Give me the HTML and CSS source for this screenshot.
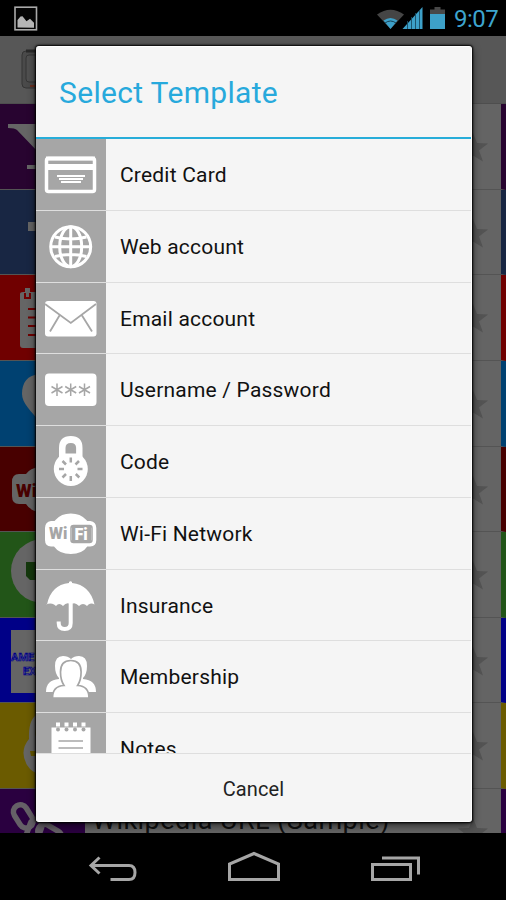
FILE: index.html
```html
<!DOCTYPE html>
<html lang="en">
<head>
<meta charset="utf-8">
<title>Select Template</title>
<link rel="stylesheet" href="styles.css">
</head>
<body>
<div class="screen">
  <header class="status">
    <svg class="status-picture" width="24" height="26" viewBox="0 0 24 26"><rect x="1" y="1.2" width="21.5" height="22.6" fill="#050505" stroke="#aaa" stroke-width="1.6"/><path d="M3.5 21.500V14l3-3.500 2-.3 4 5 3.500-2.500 4 4v5z" fill="#b5b5b5"/></svg>
    <svg class="status-signals" width="72" height="26" viewBox="0 0 72 26"><path d="M1 7.500Q14.500-2 28 7.500L14.500 22z" fill="#454545"/><path d="M7.500 13.500Q14.500 8.500 21.500 13.500L14.500 22z" fill="#3da0c8"/><path d="M9 16q5.500-4 11 0" fill="none" stroke="#174052"/><path d="M26.500 22L46.500 0V22z" fill="#3da0c8"/><path d="M31.500 14v8M35.500 10v12M39.500 6v16M43.500 3v19" stroke="#174c62" stroke-width=".9"/><path d="M54 7V2.500h4.500V0h6v2.500H69V7z" fill="#484848"/><path d="M54 7h15v15H54z" fill="#3da0c8"/></svg>
    <span class="clock">9:07</span>
  </header>
  <main class="app">
    <div class="appbar"><svg width="30" height="44" viewBox="0 0 30 44"><rect x="1" y="2" width="38" height="37" rx="4" fill="#4a4a4a" stroke="#343434"/><path d="M5 2h24" stroke="#292929" stroke-width="3"/><rect x="5" y="6" width="30" height="27" rx="3" fill="#505050" stroke="#353535"/><path d="M9 37h20" stroke="#6b3020" stroke-width="2"/></svg></div>
    <ul class="accounts">
      <li class="account plum"><svg class="logo" viewBox="0 0 85 86"><path d="M8 20h32v30L17 26q-2-2-9-2zM27 61h13v4H27z"/></svg><svg class="star" viewBox="0 0 32 32"><path d="M16 1l4 10 11 .4-9 7 4 11-10-6-10 6 4-11-9-7 11-.4z"/></svg></li>
      <li class="account navy"><svg class="logo" viewBox="0 0 85 86"><path d="M28 32h12v9H28z"/></svg><svg class="star" viewBox="0 0 32 32"><path d="M16 1l4 10 11 .4-9 7 4 11-10-6-10 6 4-11-9-7 11-.4z"/></svg></li>
      <li class="account red"><svg class="logo" viewBox="0 0 85 86"><path d="M20 19q0-2 3-2h2v-4h5v4h10v56H23q-3 0-3-3z"/><path d="M25 18v5h5v-5M28 34h12M28 42.500h12M28 51h12M28 60h12" fill="none" stroke="#700000" stroke-width="2"/></svg><svg class="star" viewBox="0 0 32 32"><path d="M16 1l4 10 11 .4-9 7 4 11-10-6-10 6 4-11-9-7 11-.4z"/></svg></li>
      <li class="account azure"><svg class="logo" viewBox="0 0 85 86"><path d="M40 13C27 14 22 22 22 33c0 9 9 17 18 28z"/></svg><svg class="star" viewBox="0 0 32 32"><path d="M16 1l4 10 11 .4-9 7 4 11-10-6-10 6 4-11-9-7 11-.4z"/></svg></li>
      <li class="account maroon"><svg class="logo" viewBox="0 0 85 86"><path d="M40 20Q30 21 26 27h-7q-7 0-7 8v14q0 8 7 8h7q4 7 14 8z"/><text class="logo-wifi" x="16" y="50">Wi</text></svg><svg class="star" viewBox="0 0 32 32"><path d="M16 1l4 10 11 .4-9 7 4 11-10-6-10 6 4-11-9-7 11-.4z"/></svg></li>
      <li class="account green"><svg class="logo" viewBox="0 0 85 86"><circle cx="43" cy="39" r="32"/><path d="M26 30h14v18H30l-4-4z" fill="#14380d"/></svg><svg class="star" viewBox="0 0 32 32"><path d="M16 1l4 10 11 .4-9 7 4 11-10-6-10 6 4-11-9-7 11-.4z"/></svg></li>
      <li class="account blue"><svg class="logo" viewBox="0 0 85 86"><path d="M11 12h62v63H11z"/><text class="logo-amex" x="11" y="43">AME</text><text class="logo-amex" x="23" y="56.500">EX</text></svg><svg class="star" viewBox="0 0 32 32"><path d="M16 1l4 10 11 .4-9 7 4 11-10-6-10 6 4-11-9-7 11-.4z"/></svg></li>
      <li class="account gold"><svg class="logo" viewBox="0 0 85 86"><path d="M40 10Q28 14 29 36q-10 12-2 26 5 8 13 9z"/><path d="M40 20q-5 2-5 14M30 48h10v5H31z" fill="#655700"/></svg><svg class="star" viewBox="0 0 32 32"><path d="M16 1l4 10 11 .4-9 7 4 11-10-6-10 6 4-11-9-7 11-.4z"/></svg></li>
      <li class="account violet"><svg class="logo" viewBox="0 0 85 86"><g fill="none" stroke="#656067" stroke-width="5.500"><rect x="16" y="15" width="14" height="25" rx="7" transform="rotate(-32 23 27)"/><rect x="28" y="30" width="12" height="25" rx="6" transform="rotate(20 34 42)"/><rect x="43" y="33" width="13" height="25" rx="6" transform="rotate(-60 49 45)"/></g></svg><span class="account-name">Wikipedia URL (Sample)</span><svg class="star" viewBox="0 0 32 32"><path d="M16 1l4 10 11 .4-9 7 4 11-10-6-10 6 4-11-9-7 11-.4z"/></svg></li>
    </ul>
  </main>
  <nav class="navbar">
    <svg width="506" height="67" viewBox="0 0 506 67" fill="none" stroke="#a6a6a6" stroke-width="3"><path d="M99.500 24.500L91 32.500l8.500 8M91.500 32.500H129q6 0 6 7t-6 7h-18.500"/><path d="M229.500 46.500V31L254 20.500 278.500 31v15.500z"/><path d="M372.500 31.500h38v15h-38zM382 25h36.500v16.500"/></svg>
  </nav>

  <section class="dialog">
    <h1 class="title">Select Template</h1>
    <ul class="templates">
      <li class="template"><span class="tile"><svg viewBox="0 0 70 72"><rect x="10.500" y="19.500" width="48" height="33" rx="2" fill="none" stroke="#fff" stroke-width="3.500"/><path d="M10 17.500h49v4H10zM10 25h49v6H10z" fill="#fff"/><path d="M21 36h28v2H21zM23 39h24v2H23zM25 42h20v2H25z" fill="#fff"/></svg></span><span class="name">Credit Card</span></li>
      <li class="template"><span class="tile"><svg viewBox="0 0 70 72" fill="none" stroke="#fff" stroke-width="3"><circle cx="34.700" cy="35.700" r="20"/><ellipse cx="34.700" cy="35.700" rx="11" ry="20"/><path d="M34.700 16v40M15 35.700h40M19 26q15.700 4 31.400 0M19 45.500q15.700-4 31.400 0"/></svg></span><span class="name">Web account</span></li>
      <li class="template"><span class="tile"><svg viewBox="0 0 70 72"><rect x="9" y="18" width="51.500" height="35.500" rx="3" fill="#fff"/><path d="M9 21l25.800 19L60 21M23.500 32.500L14 48.500M46 32.500l10 16" fill="none" stroke="#a6a6a6" stroke-width="1.800"/></svg></span><span class="name">Email account</span></li>
      <li class="template"><span class="tile"><svg viewBox="0 0 70 72"><rect x="9" y="19.500" width="51.500" height="32.500" rx="4" fill="#fff"/><g fill="none" stroke="#a6a6a6" stroke-width="1.500"><path id="asterisk" d="M21 29.500v12.500M15.500 32.500l11 6.500M15.500 39l11-6.500"/><use href="#asterisk" x="13.700"/><use href="#asterisk" x="27.500"/></g></svg></span><span class="name">Username / Password</span></li>
      <li class="template"><span class="tile"><svg viewBox="0 0 70 72"><path d="M23 34V22q0-12 11.800-12T46.500 22v12z" fill="#fff"/><circle cx="34.800" cy="43" r="17" fill="#fff"/><path d="M29.500 27.500V22q0-5 5.300-5t5.300 5v5.500z" fill="#a6a6a6"/><path d="M34.800 31.500v5M34.800 50v5M23 43h5M41.500 43h5M26.500 35l3.500 3.500M39.800 48l3.500 3.500M43 35l-3.500 3.500M30 48l-3.500 3.500" stroke="#a6a6a6" stroke-width="2.500"/></svg></span><span class="name">Code</span></li>
      <li class="template"><span class="tile"><svg viewBox="0 0 70 72"><path d="M20 21.500q5-6 14.800-6t15 6l1.500 1.500h3q6 1 6 7v12q0 6-6 6.500h-3q-5 7.500-16.500 7.500T18 48.500h-3q-6-.5-6-6.500V30q0-6 6-7h3.500z" fill="#fff"/><text class="wifi-mark" x="13" y="40.500">Wi</text><rect x="35" y="27.500" width="21" height="17" rx="2.500" fill="#fff" stroke="#a6a6a6" stroke-width="1.500"/><path d="M36 42V28h19v16H35.500z" fill="#a6a6a6"/><text class="wifi-mark light" x="38.500" y="41.500">Fi</text></svg></span><span class="name">Wi-Fi Network</span></li>
      <li class="template"><span class="tile"><svg viewBox="0 0 70 72"><path d="M11 34.500Q15 15 33 13v-1q1.500-1.500 3 0v1q18 2 22.500 21.500-3-2-6 0l-1.500 1.500q-4-4-8 0-3.500-3.500-6-2.500h-4q-3-1-6 2.500-4-4-7 0l-2-1.500q-3.500-2-8 0z" fill="#fff"/><path d="M34.700 30v23q0 6-6 6t-6-6v-1.500" fill="none" stroke="#fff" stroke-width="4"/></svg></span><span class="name">Insurance</span></li>
      <li class="template"><span class="tile"><svg viewBox="0 0 70 72" fill="#fff"><path d="M35 18q-3-3-8-3-8 0-8 10 0 8 4 12v1q-13 1-13 13h50q0-12-13-13v-1q4-4 4-12 0-10-8-10-5 0-8 3z"/><path d="M9 52h52v5H9z" fill="#a6a6a6"/><path d="M16.500 57q0-12 11.500-12.500Q24.500 39 24.500 31q0-11.500 10.300-11.500T45.100 31q0 8-3.500 13.500Q53 45 53 57z" stroke="#a6a6a6" stroke-width="1.700"/></svg></span><span class="name">Membership</span></li>
      <li class="template"><span class="tile"><svg viewBox="0 0 70 72"><path d="M15.500 14.500h39V62h-39z" fill="#fff"/><g fill="#a6a6a6"><circle cx="22" cy="16.500" r="2"/><circle cx="30.500" cy="16.500" r="2"/><circle cx="39" cy="16.500" r="2"/><circle cx="47.500" cy="16.500" r="2"/></g><path d="M22 9.500v4M30.500 9.500v4M39 9.500v4M47.500 9.500v4" stroke="#fff" stroke-width="4"/><path d="M22.500 28H47M22.500 35H47" stroke="#a6a6a6" stroke-width="1.500"/></svg></span><span class="name">Notes</span></li>
    </ul>
    <button class="cancel">Cancel</button>
  </section>
</div>
</body>
</html>
```
FILE: styles.css
```css
* { box-sizing: border-box; margin: 0; padding: 0; }
body { background: #000; font-family: Roboto, "Liberation Sans", sans-serif; }
svg { display: block; flex: none; }
ul { list-style: none; }
.screen { position: relative; display: flex; flex-direction: column; width: 506px; height: 900px; overflow: hidden; background: #000; }
.status { display: flex; height: 36px; padding: 6px 8px 0 14px; }
.status-signals { margin: 1px 0 0 auto; }
.clock { margin-left: 6px; width: 44px; font-size: 24px; line-height: 26px; letter-spacing: -0.5px; color: #3da5cf; white-space: nowrap; }
.app { height: 797px; background: #646464; overflow: hidden; }
.appbar { height: 68px; padding: 13px 0 0 21px; background: #575757; border-bottom: 1px solid #4e4e4e; }
.account { display: flex; align-items: flex-start; height: 85.650px; border-bottom: 1.500px solid #545454; border-right: 5px solid var(--tone); overflow: hidden; }
.logo { width: 85px; height: 86px; background: var(--tone); fill: #656565; }
.star { width: 32px; height: 32px; margin: 28px 12px 0 auto; fill: #535353; }
.account-name { margin: 15px 0 0 7px; font-size: 27px; line-height: 32px; letter-spacing: 0.45px; color: #101010; white-space: nowrap; }
.plum { --tone: #280430; }
.navy { --tone: #182643; }
.red { --tone: #700000; }
.azure { --tone: #004171; }
.maroon { --tone: #480000; }
.green { --tone: #225518; }
.blue { --tone: #000087; }
.gold { --tone: #6b5b00; }
.violet { --tone: #2a0040; }
.logo-wifi { font-size: 18px; font-weight: 900; fill: #480000; }
.logo-amex { font-size: 11px; font-weight: 700; fill: #555580; stroke: #000087; stroke-width: 0.7px; }
.navbar { height: 67px; }
.dialog { position: absolute; left: 36px; top: 46px; display: flex; flex-direction: column; width: 436px; height: 776px; background: #f5f5f5; border-radius: 3px; border: 1px solid #fff; border-width: 1px 1.500px 1px 0; box-shadow: 0 0 2px 1px #000, 0 3px 8px rgba(0,0,0,.65); overflow: hidden; }
.title { height: 92px; padding: 1px 0 0 23px; border-bottom: 2.500px solid #27add9; font-size: 30px; font-weight: 400; line-height: 90px; letter-spacing: 0.33px; color: #27a9dc; }
.templates { height: 614px; overflow: hidden; }
.template { display: flex; height: 71.750px; border-bottom: 1.600px solid #dedede; }
.tile { width: 70px; height: 100%; background: #a6a6a6; overflow: hidden; }
.tile svg { width: 70px; height: 72px; }
.name { padding-left: 14px; font-size: 21px; line-height: 73px; letter-spacing: 0.2px; color: #111; white-space: nowrap; }
.wifi-mark { font-size: 16px; font-weight: 900; fill: #a6a6a6; }
.light { fill: #fff; }
.cancel { flex: 1; border: 0; border-top: 1.500px solid #dedede; padding-top: 2px; background: #f5f5f5; font: 400 20px Roboto, sans-serif; letter-spacing: 0.1px; color: #222; }
```
